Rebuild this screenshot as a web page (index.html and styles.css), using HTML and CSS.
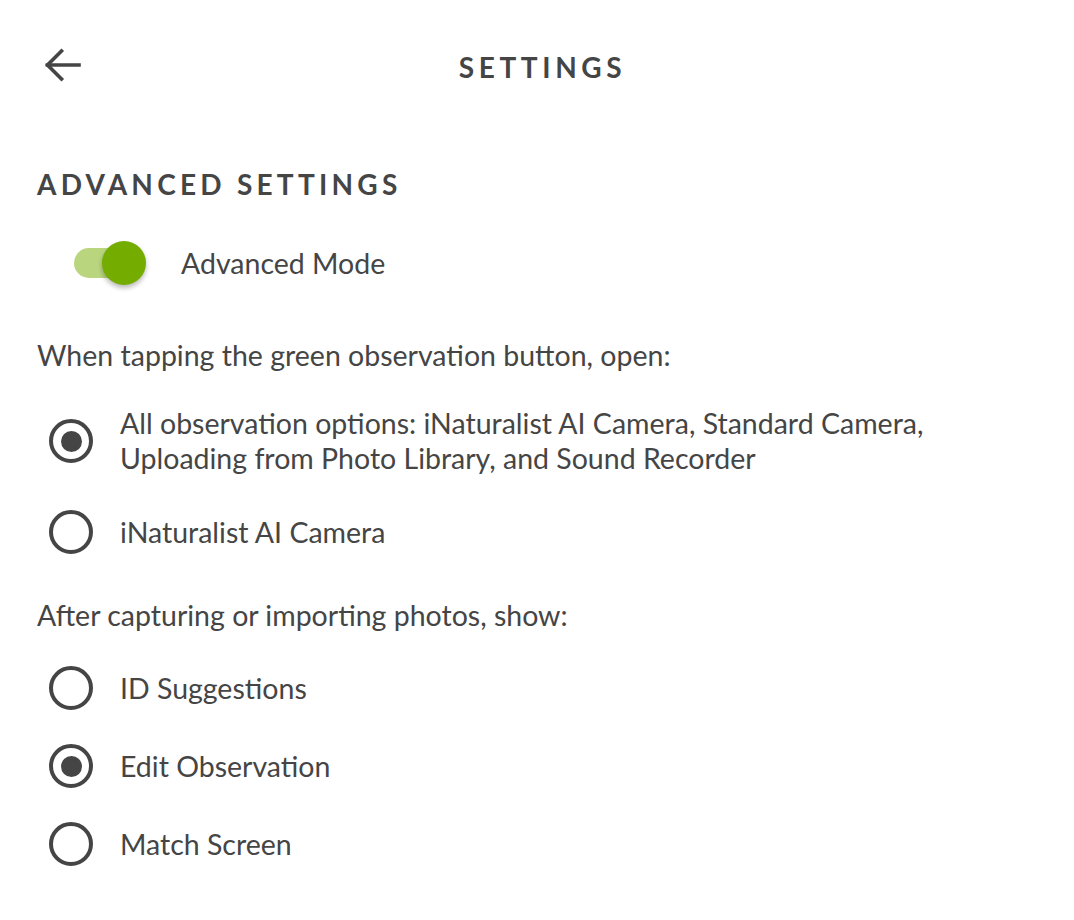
FILE: index.html
```html
<!DOCTYPE html>
<html lang="en">
<head>
<meta charset="utf-8">
<title>Settings</title>
<link rel="stylesheet" href="styles.css">
</head>
<body>
<div class="screen">
  <header class="header">
    <button class="back" aria-label="Back">
      <svg width="40" height="40" viewBox="0 0 40 40" fill="none" stroke="#454545" stroke-width="3.6" stroke-linecap="square" stroke-linejoin="miter">
        <path d="M37 18 H5.5"/>
        <path d="M19.5 4 L5.5 18 L19.5 32"/>
      </svg>
    </button>
    <h1 class="title">SETTINGS</h1>
    <span></span>
  </header>

  <main class="content">
    <h2 class="section-title">ADVANCED SETTINGS</h2>

    <div class="toggle-row">
      <div class="toggle">
        <div class="track"></div>
        <div class="thumb"></div>
      </div>
      <span class="label">Advanced Mode</span>
    </div>

    <p class="question q1">When tapping the green observation button, open:</p>
    <div class="radio-group">
      <div class="radio-row">
        <span class="radio checked"></span>
        <span class="label">All observation options: iNaturalist AI Camera, Standard Camera, Uploading from Photo Library, and Sound Recorder</span>
      </div>
      <div class="radio-row">
        <span class="radio"></span>
        <span class="label">iNaturalist AI Camera</span>
      </div>
    </div>

    <p class="question q2">After capturing or importing photos, show:</p>
    <div class="radio-group">
      <div class="radio-row">
        <span class="radio"></span>
        <span class="label">ID Suggestions</span>
      </div>
      <div class="radio-row">
        <span class="radio checked"></span>
        <span class="label">Edit Observation</span>
      </div>
      <div class="radio-row">
        <span class="radio"></span>
        <span class="label">Match Screen</span>
      </div>
    </div>
  </main>
</div>
</body>
</html>
```

FILE: styles.css
```css
* { box-sizing: border-box; }

html, body {
  margin: 0;
  padding: 0;
  background: #ffffff;
}

body {
  font-family: Lato, "Noto Sans", "Liberation Sans", sans-serif;
  color: #454545;
}

.screen {
  width: 1074px;
  min-height: 920px;
}

.header {
  display: grid;
  grid-template-columns: 1fr auto 1fr;
  align-items: center;
  height: 134px;
  padding: 0 44px 0 42px;
}

.back {
  display: flex;
  align-items: center;
  justify-content: flex-start;
  width: 40px;
  height: 40px;
  padding: 0;
  border: 0;
  background: none;
}

.title {
  margin: 0;
  font-size: 28px;
  line-height: 34px;
  font-weight: 700;
  letter-spacing: 4.6px;
  color: #454545;
  padding-left: 13px;
}

.content {
  padding: 0 37px;
}

.section-title {
  margin: 34px 0 0 0;
  font-size: 28px;
  line-height: 32px;
  font-weight: 700;
  letter-spacing: 4.25px;
  color: #454545;
}

.label {
  font-size: 28.5px;
  line-height: 35px;
}

.toggle-row {
  display: flex;
  align-items: center;
  gap: 35px;
  margin-top: 41px;
  padding-left: 37px;
  height: 44px;
}

.toggle {
  position: relative;
  width: 72px;
  height: 44px;
  display: flex;
  align-items: center;
}

.track {
  width: 62px;
  height: 30px;
  border-radius: 15px;
  background: #b9d67f;
}

.thumb {
  position: absolute;
  right: 0;
  top: 0;
  width: 44px;
  height: 44px;
  border-radius: 50%;
  background: #74ac00;
  box-shadow: 0 3px 5px rgba(0, 0, 0, 0.28);
}

.question {
  margin: 0;
  font-size: 28.5px;
  line-height: 35px;
}

.q1 { margin-top: 53px; }
.q2 { margin-top: 44px; }

.radio-group {
  display: flex;
  flex-direction: column;
  gap: 34px;
  margin-top: 33px;
}

.radio-row {
  display: flex;
  align-items: center;
  gap: 27px;
  padding-left: 12px;
  min-height: 44px;
}

.radio {
  flex: none;
  width: 44px;
  height: 44px;
  border-radius: 50%;
  border: 4.5px solid #454545;
  display: flex;
  align-items: center;
  justify-content: center;
}

.radio.checked::after {
  content: "";
  width: 21px;
  height: 21px;
  border-radius: 50%;
  background: #454545;
}
```
